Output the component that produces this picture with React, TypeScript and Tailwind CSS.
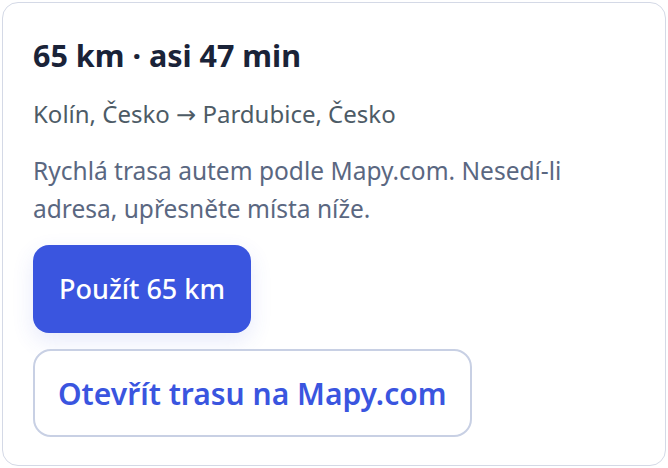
import React from "react";

const font = { fontFamily: '"Noto Sans", "Open Sans", sans-serif' };

export default function App() {
  return (
    <div className="w-[668px] h-[468px] p-[2px] bg-white" style={font}>
      <div className="h-full rounded-[16px] border border-[#d4d9e6] bg-white px-[30px] pt-[32px]">
        <div className="text-[30.5px] leading-[40px] font-bold text-[#1a2338]">
          65 km · asi 47 min
        </div>
        <div className="mt-[23px] text-[24px] leading-[32px] text-[#4d5b66]">
          Kolín, Česko{" "}
          <span className="font-['DejaVu_Sans',sans-serif] text-[24px]">→</span>{" "}
          Pardubice, Česko
        </div>
        <div className="mt-[21px] text-[24.5px] leading-[38px] text-[#5a6781] w-[590px]">
          Rychlá trasa autem podle Mapy.com. Nesedí-li adresa, upřesněte místa níže.
        </div>
        <div className="mt-[17px] flex flex-col items-start gap-[16px]">
          <button className="h-[88px] px-[26px] rounded-[16px] bg-[#3a55df] text-white text-[27px] font-medium shadow-[0_8px_22px_rgba(58,85,223,0.12)]">
            Použít 65 km
          </button>
          <button className="h-[88px] px-[23px] rounded-[18px] border-2 border-[#c8d0e4] bg-white text-[#3a55df] text-[30px] font-semibold">
            Otevřít trasu na Mapy.com
          </button>
        </div>
      </div>
    </div>
  );
}
